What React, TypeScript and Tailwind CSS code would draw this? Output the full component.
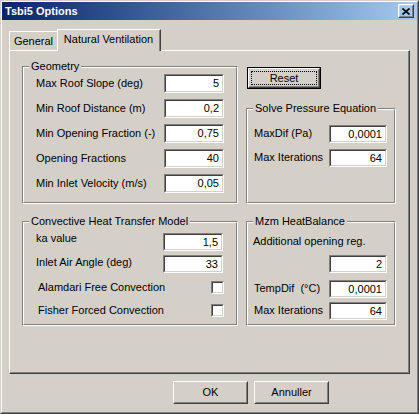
import React from "react";

const raised = "border border-t-white border-l-white border-r-[#404040] border-b-[#404040]";
const raisedInner = "border border-t-[#d4d0c8] border-l-[#d4d0c8] border-r-[#808080] border-b-[#808080]";
const sunken = "border border-t-[#808080] border-l-[#808080] border-r-white border-b-white";
const sunkenInner = "border border-t-[#404040] border-l-[#404040] border-r-[#d4d0c8] border-b-[#d4d0c8]";

function Edit({ value, className = "w-[60px] h-[18px]" }: { value: string; className?: string }) {
  return (
    <div className={`${sunken} ${className} shrink-0`}>
      <div className={`${sunkenInner} h-full bg-white flex items-center justify-end pr-[3px] leading-none`}>
        {value}
      </div>
    </div>
  );
}

function CheckBox() {
  return (
    <div className={`${sunken} w-[13px] h-[13px] shrink-0`}>
      <div className={`${sunkenInner} h-full bg-white`} />
    </div>
  );
}

function Group({ title, className = "", children }: { title: string; className?: string; children?: React.ReactNode }) {
  return (
    <div className={`relative ${sunken} ${className}`}>
      <div className="h-full border border-t-white border-l-white border-r-[#808080] border-b-[#808080]">
        {children}
      </div>
      <span className="absolute left-[6px] -top-[8px] px-[2px] bg-[#d4d0c8] leading-[14px] whitespace-nowrap">
        {title}
      </span>
    </div>
  );
}

function Row({ label, value, labelClass, editClass, className = "" }: {
  label: string;
  value: string;
  labelClass: string;
  editClass?: string;
  className?: string;
}) {
  return (
    <div className={`flex items-center ${className}`}>
      <span className={`${labelClass} shrink-0 whitespace-pre leading-none`}>{label}</span>
      <Edit value={value} className={editClass} />
    </div>
  );
}

function Button({ label, isDefault = false, className = "" }: { label: string; isDefault?: boolean; className?: string }) {
  if (isDefault) {
    return (
      <div className={`border border-black ${className}`}>
        <div className={`${raised} h-full`}>
          <div className="h-full border border-t-[#d4d0c8] border-l-[#d4d0c8] border-r-[#808080] border-b-[#808080] p-[1px]">
            <div className="h-full border border-dotted border-black flex items-center justify-center leading-none">
              {label}
            </div>
          </div>
        </div>
      </div>
    );
  }
  return (
    <div className={`${raised} ${className}`}>
      <div className={`${raisedInner} h-full flex items-center justify-center leading-none`}>{label}</div>
    </div>
  );
}

export default function App() {
  const geometry: [string, string][] = [
    ["Max Roof Slope (deg)", "5"],
    ["Min Roof Distance (m)", "0,2"],
    ["Min Opening Fraction (-)", "0,75"],
    ["Opening Fractions", "40"],
    ["Min Inlet Velocity (m/s)", "0,05"],
  ];

  return (
    <div className="w-[419px] h-[414px] border border-t-[#d4d0c8] border-l-[#d4d0c8] border-r-[#404040] border-b-[#404040] bg-[#d4d0c8] font-['Liberation_Sans',Arial,sans-serif] text-[11px] text-black select-none">
      <div className="h-full border border-t-white border-l-white border-r-[#808080] border-b-[#808080]">
        {/* title bar */}
        <div className="h-[18px] flex items-center justify-between pl-[3px] pr-[3px] bg-linear-to-r from-[#0a246a] to-[#a6caf0]">
          <span className="text-white font-bold leading-none">Tsbi5 Options</span>
          <div className={`${raised} w-[16px] h-[14px]`}>
            <div className={`${raisedInner} h-full flex items-center justify-center`}>
              <svg width="8" height="7" viewBox="0 0 8 7">
                <path d="M0.5 0.5L7.5 6.5M7.5 0.5L0.5 6.5" stroke="black" strokeWidth="1.6" />
              </svg>
            </div>
          </div>
        </div>

        {/* tabs */}
        <div className="ml-[7px] mt-[9px] h-[21px] flex items-end">
          <div className="w-[48px] h-[19px] border-t border-l border-t-white border-l-white flex items-center justify-center">
            General
          </div>
          <div className="relative z-10 w-[104px] h-[22px] -mb-px bg-[#d4d0c8] border-t border-l border-r border-t-white border-l-white border-r-[#404040]">
            <div className="h-full border-r border-r-[#808080] flex items-center justify-center pb-[3px]">
              Natural Ventilation
            </div>
          </div>
        </div>

        {/* panel */}
        <div className="ml-[7px] w-[401px] h-[324px] border border-t-white border-l-white border-r-[#404040] border-b-[#404040]">
          <div className="h-full border-r border-b border-r-[#808080] border-b-[#808080] pl-[12px] pt-[15px]">
            <div className="grid grid-cols-[216px_150px] grid-rows-[138px_105px] gap-x-[8px] gap-y-[17px]">
              <Group title="Geometry">
                <div className="pt-[6px] flex flex-col gap-[6px]">
                  {geometry.map(([l, v]) => (
                    <Row key={l} label={l} value={v} labelClass="pl-[12px] w-[140px]" editClass="w-[60px] h-[19px]" />
                  ))}
                </div>
              </Group>

              <div className="flex flex-col">
                <Button label="Reset" isDefault className="mt-[1px] ml-[1px] w-[74px] h-[22px]" />
                <Group title="Solve Pressure Equation" className="mt-[19px] flex-1">
                  <div className="pt-[15px] flex flex-col gap-[6px]">
                    <Row label="MaxDif (Pa)" value="0,0001" labelClass="pl-[6px] w-[81px] -mt-[2px]" editClass="w-[58px] h-[18px]" />
                    <Row label="Max Iterations" value="64" labelClass="pl-[6px] w-[81px] -mt-[2px]" editClass="w-[58px] h-[18px]" />
                  </div>
                </Group>
              </div>

              <Group title="Convective Heat Transfer Model">
                <div className="pt-[10px] flex flex-col">
                  <Row label="ka value" value="1,5" labelClass="pl-[12px] w-[139px] -mt-[8px]" />
                  <Row label="Inlet Air Angle (deg)" value="33" labelClass="pl-[12px] w-[139px] -mt-[4px]" className="mt-[4px]" />
                  <div className="mt-[8px] h-[13px] flex items-center">
                    <span className="pl-[14px] w-[187px] leading-none">Alamdari Free Convection</span>
                    <CheckBox />
                  </div>
                  <div className="mt-[10px] h-[13px] flex items-center">
                    <span className="pl-[14px] w-[187px] leading-none">Fisher Forced Convection</span>
                    <CheckBox />
                  </div>
                </div>
              </Group>

              <Group title="Mzm HeatBalance">
                <div className="pt-[11px] flex flex-col">
                  <span className="pl-[5px] leading-[14px]">Additional opening reg.</span>
                  <Row label="" value="2" labelClass="w-[81px]" editClass="w-[58px] h-[18px]" className="mt-[7px]" />
                  <Row label="TempDif  (°C)" value="0,0001" labelClass="pl-[6px] w-[81px] -mt-[2px]" editClass="w-[58px] h-[18px]" className="mt-[7px]" />
                  <Row label="Max Iterations" value="64" labelClass="pl-[6px] w-[81px] -mt-[2px]" editClass="w-[58px] h-[18px]" className="mt-[4px]" />
                </div>
              </Group>
            </div>
          </div>
        </div>

        {/* dialog buttons */}
        <div className="mt-[7px] ml-[171px] flex gap-[6px]">
          <Button label="OK" className="w-[75px] h-[23px]" />
          <Button label="Annuller" className="w-[75px] h-[23px]" />
        </div>
      </div>
    </div>
  );
}
